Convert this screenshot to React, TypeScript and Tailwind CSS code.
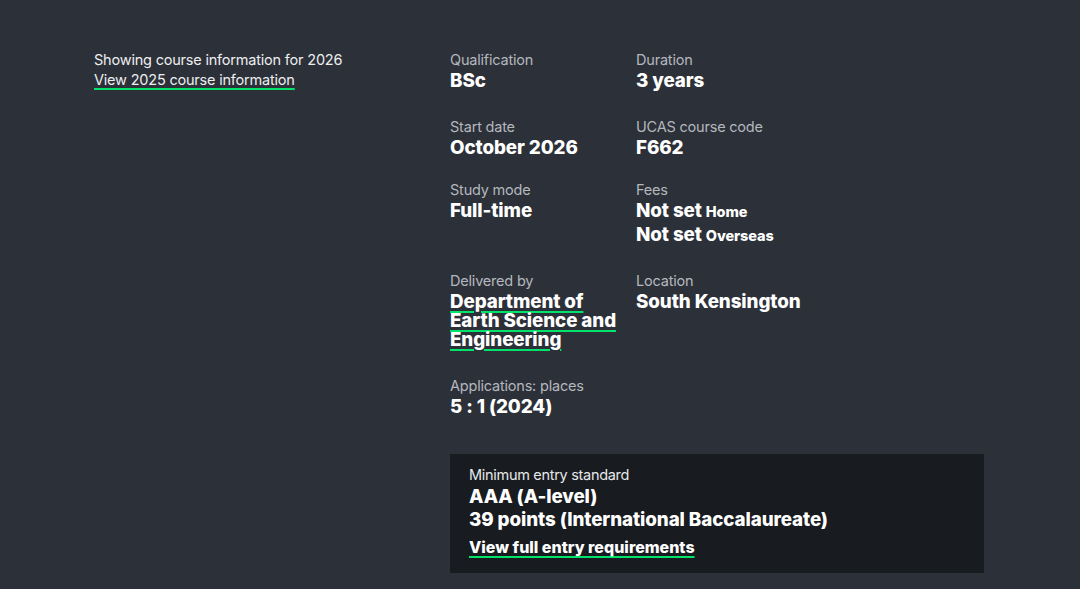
import React from "react";

const Label = ({ children }: { children: React.ReactNode }) => (
  <div className="text-[14.5px] leading-[20px] text-[#b4b8be] tracking-[-0.2px]">{children}</div>
);

const Value = ({ children }: { children: React.ReactNode }) => (
  <div className="text-[18.8px] leading-[20px] font-extrabold text-white tracking-[-0.1px] pt-[1px]">{children}</div>
);

const Green = ({ children }: { children: React.ReactNode }) => (
  <span className="underline decoration-[#00e36b] decoration-2 underline-offset-[3px]">{children}</span>
);

export default function App() {
  return (
    <div
      className="w-[1080px] h-[589px] bg-[#2c3038] text-white overflow-hidden"
      style={{ fontFamily: "Inter, 'Noto Sans', sans-serif" }}
    >
      <div className="flex pt-[50px]">
        <div className="w-[450px] shrink-0 pl-[94px] text-[14.5px] leading-[20px] text-[#eceef0] tracking-[-0.2px]">
          <div>Showing course information for 2026</div>
          <div>
            <span className="underline decoration-[#00e36b] decoration-2 underline-offset-[3px]">View 2025 course information</span>
          </div>
        </div>
        <div className="w-[534px] shrink-0">
          <div className="grid grid-cols-[186px_186px]">
            <div>
              <Label>Qualification</Label>
              <Value>BSc</Value>
            </div>
            <div>
              <Label>Duration</Label>
              <Value>3 years</Value>
            </div>
          </div>
          <div className="grid grid-cols-[186px_186px] mt-[26px]">
            <div>
              <Label>Start date</Label>
              <Value>October 2026</Value>
            </div>
            <div>
              <Label>UCAS course code</Label>
              <Value>F662</Value>
            </div>
          </div>
          <div className="grid grid-cols-[186px_186px] mt-[22px]">
            <div>
              <Label>Study mode</Label>
              <Value>Full-time</Value>
            </div>
            <div>
              <Label>Fees</Label>
              <Value>
                Not set <span className="text-[14.5px]">Home</span>
              </Value>
              <div className="mt-[2px]">
                <Value>
                  Not set <span className="text-[14.5px]">Overseas</span>
                </Value>
              </div>
            </div>
          </div>
          <div className="grid grid-cols-[186px_186px] mt-[25px]">
            <div>
              <Label>Delivered by</Label>
              <div className="text-[18.8px] leading-[19px] font-extrabold text-white tracking-[-0.1px] pr-[4px] pt-[1px]">
                <Green>Department of Earth Science and Engineering</Green>
              </div>
            </div>
            <div>
              <Label>Location</Label>
              <Value>South Kensington</Value>
            </div>
          </div>
          <div className="mt-[27px]">
            <Label>Applications: places</Label>
            <Value>5 : 1 (2024)</Value>
          </div>
          <div className="mt-[37px] bg-[#181b1f] h-[119px] px-[19px] pt-[12px]">
            <div className="text-[14.5px] leading-[18px] text-[#e6e8ea] tracking-[-0.3px]">Minimum entry standard</div>
            <div className="text-[18.8px] leading-[23px] font-extrabold text-white tracking-[-0.1px] mt-[1px]">AAA (A-level)</div>
            <div className="text-[18.8px] leading-[23px] font-extrabold text-white tracking-[-0.1px]">39 points (International Baccalaureate)</div>
            <div className="text-[16px] leading-[20px] font-extrabold text-white mt-[6px]">
              <Green>View full entry requirements</Green>
            </div>
          </div>
        </div>
      </div>
    </div>
  );
}
